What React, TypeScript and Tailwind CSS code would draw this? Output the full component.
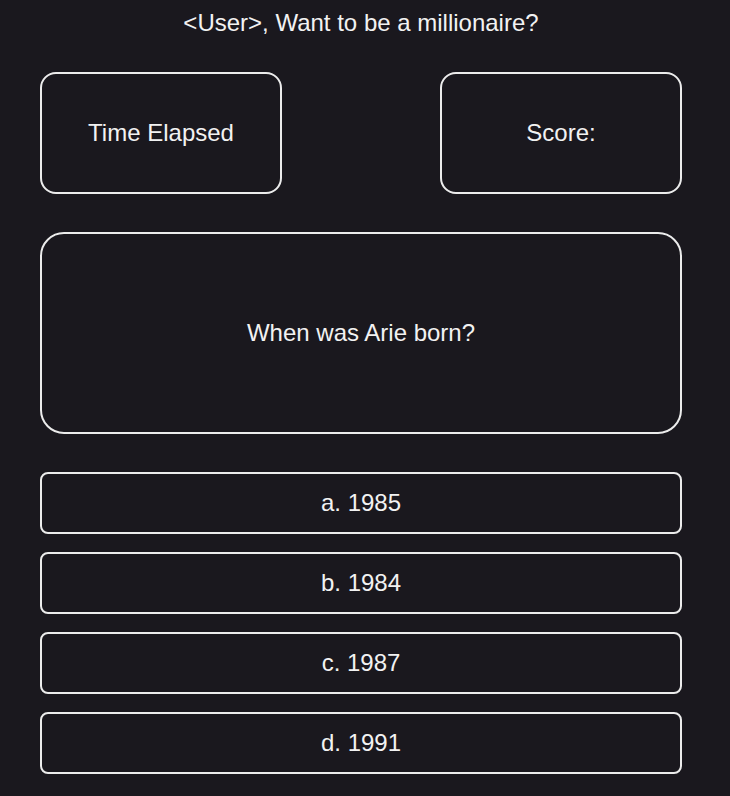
export default function App() {
  const answers = ["a. 1985", "b. 1984", "c. 1987", "d. 1991"];
  return (
    <div className="min-h-[796px] bg-[#1a181e] pl-[40px] font-['Liberation_Sans',Arial,sans-serif] text-[24px] text-[#f2f2f2]">
      <div className="w-[642px]">
        {/* title */}
        <h1 className="pt-[8px] text-center leading-[30px]">&lt;User&gt;, Want to be a millionaire?</h1>

        {/* stats */}
        <div className="mt-[34px] flex justify-between">
          <div className="flex h-[122px] w-[242px] items-center justify-center rounded-[16px] border-2 border-[#ececec]">
            Time Elapsed
          </div>
          <div className="flex h-[122px] w-[242px] items-center justify-center rounded-[16px] border-2 border-[#ececec]">
            Score:
          </div>
        </div>

        {/* question */}
        <div className="mt-[38px] flex h-[202px] items-center justify-center rounded-[24px] border-2 border-[#ececec]">
          When was Arie born?
        </div>

        {/* answers */}
        <div className="mt-[38px] flex flex-col gap-[18px]">
          {answers.map((a) => (
            <button
              key={a}
              className="flex h-[62px] items-center justify-center rounded-[8px] border-2 border-[#ececec]"
            >
              {a}
            </button>
          ))}
        </div>
      </div>
    </div>
  );
}
